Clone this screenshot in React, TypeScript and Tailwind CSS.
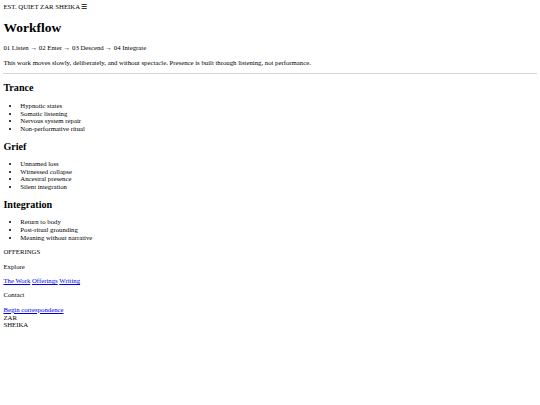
import React from 'react';

const sections = [
    { title: 'Trance', items: ['Hypnotic states', 'Somatic listening', 'Nervous system repair', 'Non-performative ritual'] },
    { title: 'Grief', items: ['Unnamed loss', 'Witnessed collapse', 'Ancestral presence', 'Silent integration'] },
    { title: 'Integration', items: ['Return to body', 'Post-ritual grounding', 'Meaning without narrative'] },
];

export default function App() {
    return (
        <div className="p-[3.4px] font-['Liberation_Serif',serif] text-[6.75px] leading-[1.14] text-black bg-white min-h-screen">
            {/* Header */}
            <div>
                <span>EST. QUIET ZAR SHEIKA</span> <span>☰</span>
            </div>

            <h1 className="text-[13.5px] font-bold leading-[1.14] mt-[9px] mb-[9px]">Workflow</h1>
            <p className="my-[6.75px]">01 Listen → 02 Enter → 03 Descend → 04 Integrate</p>
            <p className="my-[6.75px]">
                This work moves slowly, deliberately, and without spectacle. Presence is built through listening, not performance.
            </p>
            <hr className="my-[3.4px] border-t border-[#d4d4d4] border-b-0" />

            {sections.map(s => (
                <section key={s.title}>
                    <h2 className="text-[10.1px] font-bold leading-[1.14] mt-[8px] mb-[8px]">{s.title}</h2>
                    <ul className="list-disc pl-[16.9px] my-[6.75px]">
                        {s.items.map(item => (
                            <li key={item}>{item}</li>
                        ))}
                    </ul>
                </section>
            ))}

            {/* Footer */}
            <footer>
                <div>OFFERINGS</div>
                <p className="my-[6.75px]">Explore</p>
                <p className="my-[6.75px]">
                    <a href="#" className="text-[#0000ee] underline">The Work</a>{' '}
                    <a href="#" className="text-[#0000ee] underline">Offerings</a>{' '}
                    <a href="#" className="text-[#0000ee] underline">Writing</a>
                </p>
                <p className="my-[6.75px]">Contact</p>
                <a href="#" className="text-[#0000ee] underline">Begin correspondence</a>
                <div>
                    ZAR
                    <br />
                    SHEIKA
                </div>
            </footer>
        </div>
    );
}
